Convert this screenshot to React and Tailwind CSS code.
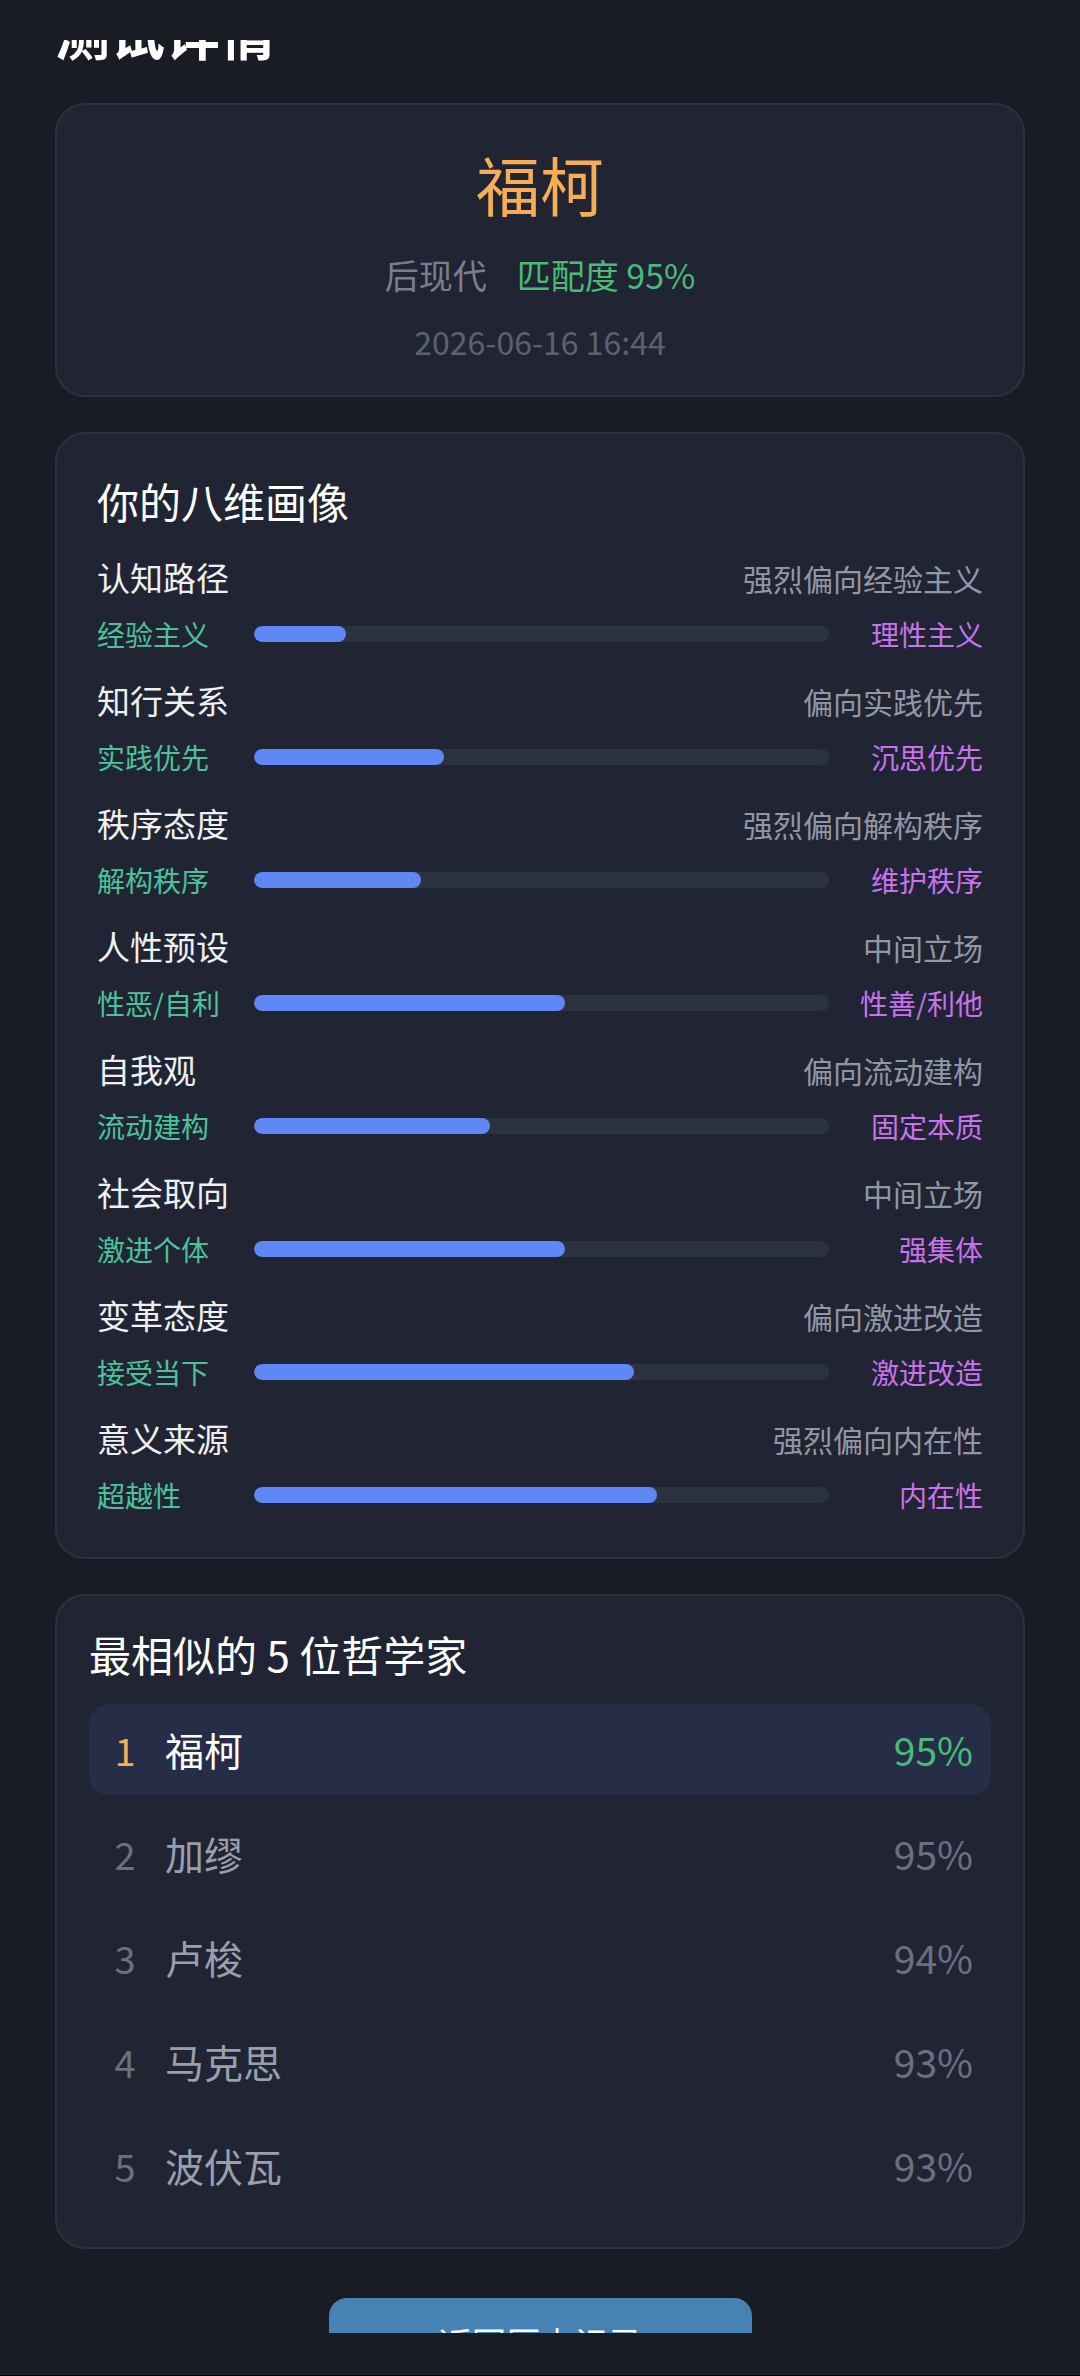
const dimensions = [
  { name: '认知路径', desc: '强烈偏向经验主义', left: '经验主义', right: '理性主义', value: 16 },
  { name: '知行关系', desc: '偏向实践优先', left: '实践优先', right: '沉思优先', value: 33 },
  { name: '秩序态度', desc: '强烈偏向解构秩序', left: '解构秩序', right: '维护秩序', value: 29 },
  { name: '人性预设', desc: '中间立场', left: '性恶/自利', right: '性善/利他', value: 54 },
  { name: '自我观', desc: '偏向流动建构', left: '流动建构', right: '固定本质', value: 41 },
  { name: '社会取向', desc: '中间立场', left: '激进个体', right: '强集体', value: 54 },
  { name: '变革态度', desc: '偏向激进改造', left: '接受当下', right: '激进改造', value: 66 },
  { name: '意义来源', desc: '强烈偏向内在性', left: '超越性', right: '内在性', value: 70 },
];

const matches = [
  { name: '福柯', score: 95 },
  { name: '加缪', score: 95 },
  { name: '卢梭', score: 94 },
  { name: '马克思', score: 93 },
  { name: '波伏瓦', score: 93 },
];

const DimensionRow = ({ dim }) => (
  <div>
    <div className="flex items-center justify-between h-[44px]">
      <span className="text-[33px] text-[#eef0f4]">{dim.name}</span>
      <span className="text-[30px] text-[#9297a5]">{dim.desc}</span>
    </div>
    <div className="flex items-center h-[40px] mt-[14px]">
      <span className="w-[141px] shrink-0 text-[28px] text-[#4cc29b]">{dim.left}</span>
      <div className="flex-1 ml-[16px] mr-[14px] h-[16px] rounded-full bg-[#2d3240] overflow-hidden">
        <div className="h-full rounded-full bg-[#5f87f6]" style={{ width: `${dim.value}%` }} />
      </div>
      <span className="w-[140px] shrink-0 text-right text-[28px] text-[#c872ee]">{dim.right}</span>
    </div>
  </div>
);

const MatchRow = ({ item, rank }) => {
  const top = rank === 1;
  return (
    <div
      className={`flex items-center h-[91px] pl-[24px] pr-[18px] rounded-[20px] ${top ? 'bg-[#262d46]' : ''}`}
    >
      <span className={`w-[24px] text-center text-[38px] ${top ? 'text-[#f6ad55]' : 'text-[#6b7080]'}`}>
        {rank}
      </span>
      <span className={`ml-[28px] text-[39px] ${top ? 'text-white' : 'text-[#9a9fad]'}`}>{item.name}</span>
      <span className={`ml-auto text-[39px] ${top ? 'text-[#48bb78]' : 'text-[#6b7080]'}`}>{item.score}%</span>
    </div>
  );
};

export default function App() {
  return (
    <div className="h-[2376px] flex flex-col overflow-hidden bg-[#1a1c25] font-['Noto_Sans_CJK_SC','Noto_Sans',sans-serif]">
      <div className="h-[40px] shrink-0" />

      <div className="flex-1 overflow-hidden">
        <div className="px-[55px]">
          <h1 className="mt-[-36px] h-[54px] leading-[54px] text-[55px] font-semibold text-white">测试详情</h1>

          {/* result summary */}
          <div className="mt-[45px] rounded-[30px] border-2 border-[#2c3142] bg-[#212533] pt-[38px] pb-[34px] flex flex-col items-center">
            <div className="text-[64px] leading-[80px] text-[#f6ad55]">福柯</div>
            <div className="mt-[28px] flex items-center h-[46px] text-[34px]">
              <span className="text-[#7a7f8e]">后现代</span>
              <span className="ml-[30px] text-[#48bb78]">匹配度 95%</span>
            </div>
            <div className="mt-[24px] h-[40px] leading-[40px] text-[32px] text-[#5c6171]">2026-06-16 16:44</div>
          </div>

          {/* eight dimensions */}
          <div className="mt-[35px] rounded-[30px] border-2 border-[#2c3142] bg-[#212533] px-[40px] pt-[38px] pb-[42px]">
            <h2 className="text-[42px] leading-[58px] text-white">你的八维画像</h2>
            <div className="mt-[26px] flex flex-col gap-[25px]">
              {dimensions.map((d) => (
                <DimensionRow key={d.name} dim={d} />
              ))}
            </div>
          </div>

          {/* closest philosophers */}
          <div className="mt-[35px] rounded-[30px] border-2 border-[#2c3142] bg-[#212533] px-[32px] pt-[29px] pb-[36px]">
            <h2 className="text-[42px] leading-[58px] text-white">最相似的 5 位哲学家</h2>
            <div className="mt-[21px] flex flex-col gap-[13px]">
              {matches.map((m, i) => (
                <MatchRow key={m.name} item={m} rank={i + 1} />
              ))}
            </div>
          </div>

          <div className="mt-[49px] flex justify-center">
            <button className="w-[423px] rounded-[18px] bg-[#4682b4] pt-[22px] pb-[22px] text-[34px] leading-[46px] text-white">
              返回历史记录
            </button>
          </div>
        </div>
      </div>

      <div className="h-[42px] shrink-0" />
      <div className="h-[1px] shrink-0 bg-black" />
    </div>
  );
}
